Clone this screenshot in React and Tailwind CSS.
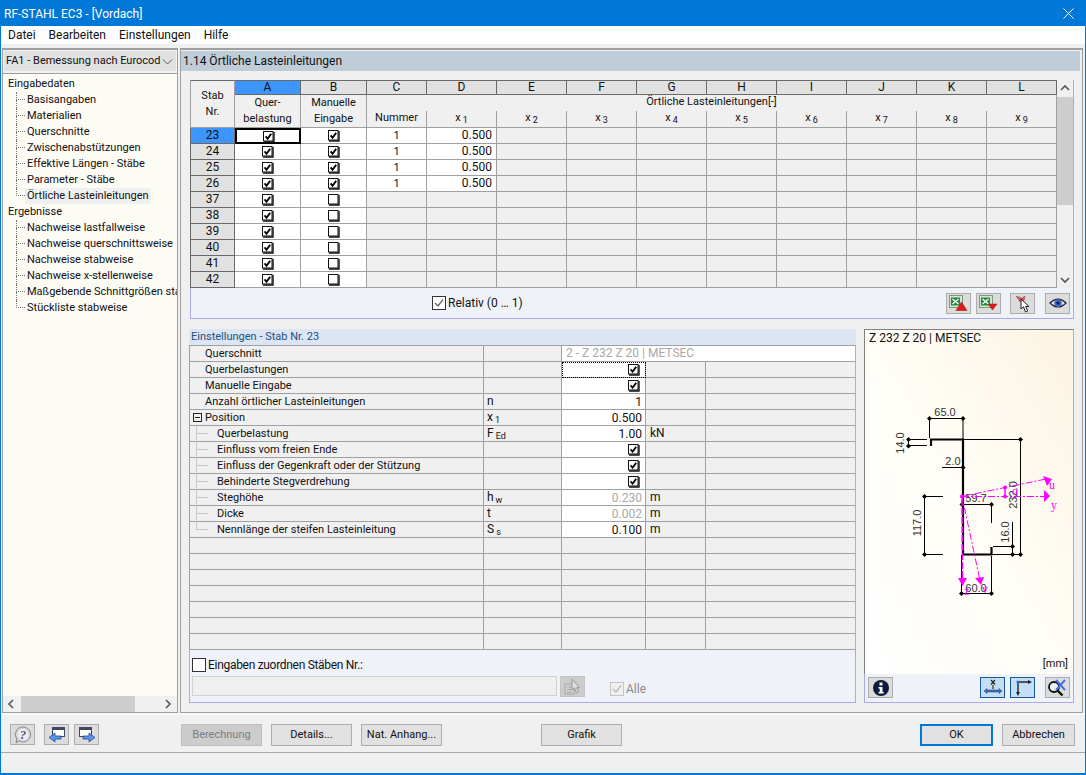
import React from 'react';

const FONT = '[font-family:Roboto,sans-serif]';

const treeInput = [
  'Basisangaben',
  'Materialien',
  'Querschnitte',
  'Zwischenabstützungen',
  'Effektive Längen - Stäbe',
  'Parameter - Stäbe',
  'Örtliche Lasteinleitungen',
];
const treeResults = [
  'Nachweise lastfallweise',
  'Nachweise querschnittsweise',
  'Nachweise stabweise',
  'Nachweise x-stellenweise',
  'Maßgebende Schnittgrößen stabweise',
  'Stückliste stabweise',
];

const letters = ['C', 'D', 'E', 'F', 'G', 'H', 'I', 'J', 'K', 'L'];
const xCols = ['1', '2', '3', '4', '5', '6', '7', '8', '9'];
const members = [
  { nr: 23, manual: true, nummer: '1', x1: '0.500' },
  { nr: 24, manual: true, nummer: '1', x1: '0.500' },
  { nr: 25, manual: true, nummer: '1', x1: '0.500' },
  { nr: 26, manual: true, nummer: '1', x1: '0.500' },
  { nr: 37 },
  { nr: 38 },
  { nr: 39 },
  { nr: 40 },
  { nr: 41 },
  { nr: 42 },
];

const settings = [
  { label: 'Querschnitt', wide: '2 - Z 232 Z 20 | METSEC' },
  { label: 'Querbelastungen', check: true, focus: true },
  { label: 'Manuelle Eingabe', check: true },
  { label: 'Anzahl örtlicher Lasteinleitungen', sym: 'n', value: '1' },
  { label: 'Position', group: true, sym: 'x', sub: '1', value: '0.500' },
  { label: 'Querbelastung', child: true, sym: 'F', sub: 'Ed', value: '1.00', unit: 'kN' },
  { label: 'Einfluss vom freien Ende', child: true, check: true },
  { label: 'Einfluss der Gegenkraft oder der Stützung', child: true, check: true },
  { label: 'Behinderte Stegverdrehung', child: true, check: true },
  { label: 'Steghöhe', child: true, sym: 'h', sub: 'w', value: '0.230', muted: true, unit: 'm' },
  { label: 'Dicke', child: true, sym: 't', value: '0.002', muted: true, unit: 'm' },
  { label: 'Nennlänge der steifen Lasteinleitung', child: true, last: true, sym: 'S', sub: 's', value: '0.100', unit: 'm' },
  {}, {}, {}, {}, {}, {}, {},
];

function Check({ on = true }) {
  return (
    <svg width="13" height="13" viewBox="0 0 13 13" className="shrink-0">
      <rect x="1.5" y="1.5" width="9.5" height="9.5" fill="#fff" stroke="#111" />
      <path d="M2 12h10V2" fill="none" stroke="#111" strokeWidth="1.4" />
      {on && <path d="M3.6 6.4l2 2.4 3.6-5" fill="none" stroke="#000" strokeWidth="1.9" />}
    </svg>
  );
}

function LightCheck({ on, muted }) {
  return (
    <svg width="14" height="14" viewBox="0 0 14 14" className="shrink-0">
      <rect x=".5" y=".5" width="13" height="13" fill={muted ? '#f0f0f0' : '#fff'} stroke={muted ? '#c4c4c4' : '#333'} />
      {on && <path d="M3 7l3 3 5-6.500" fill="none" stroke={muted ? '#b8b8b8' : '#666'} strokeWidth="1.300" />}
    </svg>
  );
}

function TreeRow({ label, last, active }) {
  return (
    <div className="flex h-4 ml-[9px]">
      <div className="w-[9px] h-4 shrink-0">
        <div className="h-2 border-l border-b border-dotted border-[#777]" />
        {!last && <div className="h-2 border-l border-dotted border-[#777]" />}
      </div>
      <div className={`px-[2px] leading-4 whitespace-nowrap ${active ? 'bg-[#f0f0f0]' : ''}`}>{label}</div>
    </div>
  );
}

function Arrow({ dir }) {
  const paths = {
    up: 'M2 7l4-4 4 4',
    down: 'M2 4l4 4 4-4',
    left: 'M7 2L3 6l4 4',
    right: 'M4 2l4 4-4 4',
  };
  return (
    <svg width="12" height="12" viewBox="0 0 12 12">
      <path d={paths[dir]} fill="none" stroke="#555" strokeWidth="1.600" />
    </svg>
  );
}

function Sub({ sym, sub }) {
  return (
    <span>
      {sym}
      {sub && <span className="text-[9px] ml-[2px] relative top-[2px]">{sub}</span>}
    </span>
  );
}

function ToolBtn({ children, className = '', active }) {
  return (
    <button
      className={`w-[25px] h-[21px] flex items-center justify-center shrink-0 border ${
        active ? 'bg-[#c3dff5] border-[#17589c]' : 'bg-[#dcdcdc] border-[#adadad]'
      } ${className}`}
    >
      {children}
    </button>
  );
}

function Btn({ children, className = '', disabled }) {
  return (
    <button
      className={`w-[81px] h-[22px] shrink-0 border text-center ${
        disabled ? 'bg-[#cccccc] border-[#bfbfbf] text-[#7d7d7d]' : 'bg-[#e1e1e1] border-[#adadad]'
      } ${className}`}
    >
      {children}
    </button>
  );
}

function ExcelIcon({ down }) {
  return (
    <svg width="21" height="18" viewBox="0 0 21 18">
      <rect x="1.500" y="1.500" width="13" height="12" fill="#d6e4d6" stroke="#7d9a7d" />
      <rect x="3" y="3.500" width="9" height="8" fill="#1f8a3c" />
      <path d="M4.500 5l6 5M10.500 5l-6 5" stroke="#fff" strokeWidth="1.300" />
      {down ? (
        <path d="M10 10h9l-4.500 6z" fill="#e01818" stroke="#8f1010" strokeWidth=".5" />
      ) : (
        <path d="M13.500 8l5.500 8.500H8z" fill="#e01818" stroke="#8f1010" strokeWidth=".5" />
      )}
    </svg>
  );
}

function PinIcon() {
  return (
    <svg width="20" height="19" viewBox="0 0 20 19">
      <path d="M3 2l6 2 3-2-1 5-4 1z" fill="#d9525e" stroke="#9a5a60" strokeWidth=".6" />
      <path d="M8 5v10l2.500-2.200L12.500 18l2.200-1-2-4.500h3.300z" fill="#fff" stroke="#222" />
    </svg>
  );
}

function EyeIcon() {
  return (
    <svg width="20" height="14" viewBox="0 0 20 14">
      <path d="M2 7q8-8 16 0q-8 8-16 0z" fill="#dfe6f5" stroke="#222" strokeWidth="1.200" />
      <circle cx="10" cy="7" r="3.800" fill="#4468c9" />
      <circle cx="10" cy="7" r="1.600" fill="#0c1a44" />
    </svg>
  );
}

function HelpIcon() {
  return (
    <svg width="20" height="18" viewBox="0 0 20 18">
      <path d="M10 1a7.500 7.500 0 1 1-4 13.800L3 17l.8-4A7.500 7.500 0 0 1 10 1z" fill="#d4d6dc" stroke="#8a8a8a" />
      <circle cx="10" cy="8.500" r="5.500" fill="#eeeeee" />
      <text x="10" y="13" textAnchor="middle" fontSize="13" fontWeight="700" fontStyle="italic" fill="#4d5874" fontFamily="Liberation Serif, serif">?</text>
    </svg>
  );
}

function WinArrowIcon({ right }) {
  return (
    <svg width="20" height="18" viewBox="0 0 20 18">
      {right ? (
        <>
          <rect x="2.500" y="1.500" width="12" height="9" fill="#fff" stroke="#40495c" />
          <rect x="2.500" y="1.500" width="12" height="2.500" fill="#40495c" />
          <path d="M6 10h6V7l6 4.500-6 4.500v-3H6z" fill="#5b95ea" stroke="#1f4aa0" strokeWidth=".8" />
        </>
      ) : (
        <>
          <rect x="5.500" y="1.500" width="12" height="9" fill="#fff" stroke="#40495c" />
          <rect x="5.500" y="1.500" width="12" height="2.500" fill="#40495c" />
          <path d="M14 10H8V7l-6 4.500L8 16v-3h6z" fill="#5b95ea" stroke="#1f4aa0" strokeWidth=".8" />
        </>
      )}
    </svg>
  );
}

function InfoIcon() {
  return (
    <svg width="18" height="18" viewBox="0 0 18 18">
      <circle cx="9" cy="9" r="8" fill="#0e1b3c" />
      <rect x="7.500" y="3.500" width="3" height="3" fill="#fff" />
      <path d="M6.500 8h4v5h1.200v1.500H6.500V13h1.200V9.500H6.500z" fill="#fff" />
    </svg>
  );
}

function BeamIcon() {
  return (
    <svg width="20" height="18" viewBox="0 0 20 18">
      <path d="M8 1l4 4.500M12 1L8 5.500" stroke="#222" strokeWidth="1.200" />
      <path d="M9 6h2v4H9z" fill="#777" />
      <path d="M1 12l3-2.500v1.500h12V9.500l3 2.500-3 2.500V13H4v1.500z" fill="#3d6fb8" stroke="#1f3f7a" strokeWidth=".5" />
    </svg>
  );
}

function AxesIcon() {
  return (
    <svg width="20" height="18" viewBox="0 0 20 18">
      <path d="M5 3v11M5 3h11" stroke="#222" strokeWidth="1.400" fill="none" />
      <path d="M15 1l4 2-4 2zM3 13l2 4 2-4z" fill="#222" />
      <circle cx="5" cy="3" r="1.600" fill="#3d6fb8" />
    </svg>
  );
}

function ZoomOffIcon() {
  return (
    <svg width="21" height="19" viewBox="0 0 21 19">
      <circle cx="7" cy="9" r="5" fill="#eef2f7" stroke="#111" strokeWidth="1.800" />
      <path d="M10.500 12.500l5 5" stroke="#111" strokeWidth="2.400" />
      <path d="M9 2l9 10M18 2l-9 10" stroke="#4a72d8" strokeWidth="2" />
    </svg>
  );
}

function PickIcon() {
  return (
    <svg width="20" height="19" viewBox="0 0 20 19" opacity=".6">
      <rect x="2" y="7" width="9" height="10" fill="#d8d8d8" stroke="#8a8a8a" />
      <path d="M4 10h5M4 12.500h5M4 15h5" stroke="#8a8a8a" />
      <path d="M9 2v11l2.500-2.200L13.500 16l2-1-2-4.300h3z" fill="#eee" stroke="#777" />
    </svg>
  );
}

function Dot({ x, y }) {
  return <path d={`M${x - 2.500} ${y}L${x} ${y - 2.500}L${x + 2.500} ${y}L${x} ${y + 2.500}z`} fill="#000" />;
}

function Section() {
  const dim = 'fill-[#333] text-[11px]';
  return (
    <svg viewBox="865 346 208 309" className="w-[208px] h-[309px] [font-family:Liberation_Sans,sans-serif]">
      <g stroke="#000" strokeWidth="1" fill="none">
        <path d="M929.500 418.500H963M929.500 418.500V438M963 418.500V439" />
        <path d="M908.500 439.500V446M908 439.500H927M908 445.500H927" />
        <path d="M942 467.500H963" />
        <path d="M963 439.500H1021M992 554.500H1021M1020.500 439.500V554.500" />
        <path d="M924.500 496.500V554.500M924 496.500H943M924 554.500H943" />
        <path d="M962 504.500H992M991.500 504.500V523" />
        <path d="M1012.500 522V554.500M993 546.500H1013" />
        <path d="M961.500 555V594M991.500 556V594M961 593.500H992" />
      </g>
      <path d="M931 446V439.500H963V554.500H991.500V547" fill="none" stroke="#000" strokeWidth="2.200" />
      <g>
        <Dot x={929.500} y={418.500} />
        <Dot x={963} y={418.500} />
        <Dot x={908.500} y={439.500} />
        <Dot x={908.500} y={446} />
        <Dot x={963} y={467.500} />
        <Dot x={1020.500} y={439.500} />
        <Dot x={1020.500} y={554.500} />
        <Dot x={924.500} y={496.500} />
        <Dot x={924.500} y={554.500} />
        <Dot x={962} y={504.500} />
        <Dot x={991.500} y={504.500} />
        <Dot x={1012.500} y={546.500} />
        <Dot x={1012.500} y={554.500} />
        <Dot x={961.500} y={593.500} />
        <Dot x={991.500} y={593.500} />
      </g>
      <text x="945" y="416" textAnchor="middle" className={dim}>65.0</text>
      <text x="953" y="465" textAnchor="middle" className={dim}>2.0</text>
      <text x="976" y="502" textAnchor="middle" className={dim}>59.7</text>
      <text x="976" y="592" textAnchor="middle" className={dim}>60.0</text>
      <text transform="translate(904 443) rotate(-90)" textAnchor="middle" className={dim}>14.0</text>
      <text transform="translate(921 523) rotate(-90)" textAnchor="middle" className={dim}>117.0</text>
      <text transform="translate(1017 495) rotate(-90)" textAnchor="middle" className={dim}>232.0</text>
      <text transform="translate(1009 532) rotate(-90)" textAnchor="middle" className={dim}>16.0</text>
      <g stroke="#ff00ff" strokeWidth="1" fill="none">
        <path d="M962 496.500H1045" strokeDasharray="7 2 2 2" />
        <path d="M962 496.500L1046 479" strokeDasharray="7 2 2 2" />
        <path d="M979.500 578L962 496.500" strokeDasharray="7 2 2 2" />
        <path d="M962.500 578L962 496.500" strokeWidth="1.500" strokeDasharray="7 2" />
        <path d="M1005 487V497" strokeWidth="1.500" />
      </g>
      <g fill="#ff00ff">
        <path d="M1044 490V502l6-6z" />
        <path d="M1043 476l4 10 5-7z" />
        <path d="M958 578h9l-4.500 8z" />
        <path d="M975 578l9-1-3 8z" />
        <circle cx="1005" cy="487.500" r="2" />
        <circle cx="1005" cy="496.500" r="2" />
        <circle cx="962" cy="496.500" r="2" />
      </g>
      <g className="fill-[#ff00ff] text-[12px] [font-family:Liberation_Serif,serif]">
        <text x="1049" y="489">u</text>
        <text x="1051" y="509">y</text>
        <text x="964" y="595">z</text>
        <text x="982" y="593">v</text>
        <text x="1012" y="495">α</text>
      </g>
    </svg>
  );
}

export default function App() {
  return (
    <div className={`w-[1086px] h-[775px] flex flex-col border border-b-2 border-[#0078d7] bg-[#f0f0f0] text-[11px] text-[#111] overflow-hidden ${FONT}`}>
      <div className="h-[25px] shrink-0 bg-[#0078d7] flex items-center justify-between pl-[3px] pr-[11px] text-white text-[12px]">
        <span>RF-STAHL EC3 - [Vordach]</span>
        <svg width="11" height="11" viewBox="0 0 11 11">
          <path d="M.5.5l10 10M10.500.5l-10 10" stroke="#fff" strokeWidth="1" />
        </svg>
      </div>
      <div className="h-[18px] shrink-0 bg-white flex items-center gap-[13px] pl-[7px] text-[12px]">
        <span>Datei</span>
        <span>Bearbeiten</span>
        <span>Einstellungen</span>
        <span>Hilfe</span>
      </div>

      <div className="mt-[4px] h-[665px] shrink-0 flex gap-[2px] pl-[1px]">
        {/* navigator */}
        <div className="w-[176px] flex flex-col border-t-2 border-x border-b border-[#a0a0a0]">
          <div className="mx-px mt-px h-[20px] bg-[#e1e1e1] flex items-center justify-between pl-[2px] pr-[3px] shrink-0">
            <span className="whitespace-nowrap">FA1 - Bemessung nach Eurocod</span>
            <svg width="11" height="11" viewBox="0 0 11 11" className="shrink-0">
              <path d="M1 3.500l4.500 4.500L10 3.500" fill="none" stroke="#555" />
            </svg>
          </div>
          <div className="mt-[2px] flex-1 flex flex-col min-h-0 border-t border-[#a0a0a0] bg-[#fcfbf4]">
            <div className="flex-1 overflow-hidden pl-[4px] pt-[2px]">
              <div className="h-4 leading-4 ml-[1px]">Eingabedaten</div>
              {treeInput.map((t, i) => (
                <TreeRow key={t} label={t} last={i === treeInput.length - 1} active={i === treeInput.length - 1} />
              ))}
              <div className="h-4 leading-4 ml-[1px]">Ergebnisse</div>
              {treeResults.map((t, i) => (
                <TreeRow key={t} label={t} last={i === treeResults.length - 1} />
              ))}
            </div>
            <div className="h-[16px] shrink-0 bg-[#f0f0f0] flex items-center">
              <div className="w-[18px] flex justify-center"><Arrow dir="left" /></div>
              <div className="w-[114px] h-full bg-[#cdcdcd]" />
              <div className="flex-1" />
              <div className="w-[18px] flex justify-center"><Arrow dir="right" /></div>
            </div>
          </div>
        </div>

        {/* content */}
        <div className="w-[903px] flex flex-col border-t-2 border-x border-b border-[#a0a0a0]">
          <div className="mt-px h-[20px] w-[899px] bg-[#bfcdd9] pl-[2px] leading-[20px] text-[12px] shrink-0">1.14 Örtliche Lasteinleitungen</div>

          {/* upper table */}
          <div className="mt-[9px] ml-[9px] w-[884px] shrink-0">
            <div className="flex border-r border-[#aaaaea]">
              <div className="w-[867px] grid grid-cols-[45px_66px_66px_60px_repeat(9,70px)] grid-rows-[15px_16px_17px_repeat(10,16px)]">
                <div className="row-span-3 flex flex-col items-center justify-center border-t border-l border-b border-r border-t-[#696969] border-l-[#a0a0a0] border-b-[#a0a0a0] border-r-[#a0a0a0] leading-[16px]">
                  <span>Stab</span>
                  <span>Nr.</span>
                </div>
                <div className="border-y border-r border-[#696969] bg-[#3d95ff] text-center text-[12px] leading-[13px]">A</div>
                <div className="border-y border-r border-[#696969] bg-[#e1e1e1] text-center text-[12px] leading-[13px]">B</div>
                {letters.map((l) => (
                  <div key={l} className="border-y border-r border-[#696969] bg-[#e1e1e1] text-center text-[12px] leading-[13px]">{l}</div>
                ))}

                <div className="row-span-2 flex flex-col items-center justify-center border-r border-b border-[#a0a0a0] leading-[16px]">
                  <span>Quer-</span>
                  <span>belastung</span>
                </div>
                <div className="row-span-2 flex flex-col items-center justify-center border-r border-b border-[#a0a0a0] leading-[16px]">
                  <span>Manuelle</span>
                  <span>Eingabe</span>
                </div>
                <div className="col-span-10 text-center leading-[14px] border-r border-[#a0a0a0]">Örtliche Lasteinleitungen[-]</div>

                <div className="text-center border-r border-b border-[#a0a0a0] leading-[14px]">Nummer</div>
                {xCols.map((n) => (
                  <div key={n} className="text-center border-r border-b border-[#a0a0a0] leading-[14px]">
                    <Sub sym="x" sub={n} />
                  </div>
                ))}

                {members.map((m, i) => (
                  <React.Fragment key={m.nr}>
                    <div className={`border-x border-b border-x-[#696969] border-b-[#696969] text-center text-[12px] leading-[15px] ${i === 0 ? 'bg-[#3d95ff]' : 'bg-[#e1e1e1]'}`}>{m.nr}</div>
                    <div className={`bg-white flex items-center justify-center ${i === 0 ? 'border-2 border-black' : 'border-r border-b border-[#a0a0a0]'}`}>
                      <Check />
                    </div>
                    <div className="bg-white flex items-center justify-center border-r border-b border-[#a0a0a0]">
                      <Check on={!!m.manual} />
                    </div>
                    <div className={`text-center leading-[15px] border-r border-b border-[#a0a0a0] ${m.nummer ? 'bg-white' : ''}`}>{m.nummer}</div>
                    <div className={`text-right pr-[4px] text-[12px] leading-[15px] border-r border-b border-[#a0a0a0] ${m.x1 ? 'bg-white' : ''}`}>{m.x1}</div>
                    {letters.slice(2).map((l) => (
                      <div key={l} className="border-r border-b border-[#a0a0a0]" />
                    ))}
                  </React.Fragment>
                ))}
              </div>
              <div className="w-[16px] flex flex-col bg-[#f0f0f0]">
                <div className="h-[17px] flex items-center justify-center"><Arrow dir="up" /></div>
                <div className="h-[108px] bg-[#cdcdcd]" />
                <div className="flex-1" />
                <div className="h-[16px] flex items-center justify-center"><Arrow dir="down" /></div>
              </div>
            </div>
            <div className="h-[31px] flex items-center bg-[#eff3f9] border-x border-b border-[#aaaaea]">
              <div className="w-[241px] shrink-0" />
              <LightCheck on />
              <span className="ml-[2px] w-[78px] shrink-0 text-[12px] whitespace-nowrap">Relativ (0 … 1)</span>
              <ToolBtn className="ml-[420px]"><ExcelIcon /></ToolBtn>
              <ToolBtn className="ml-[5px]"><ExcelIcon down /></ToolBtn>
              <ToolBtn className="ml-[9px]"><PinIcon /></ToolBtn>
              <ToolBtn className="ml-[10px]"><EyeIcon /></ToolBtn>
            </div>
          </div>

          {/* lower area */}
          <div className="mt-[10px] ml-[8px] flex gap-[8px] h-[374px] shrink-0">
            <div className="w-[667px] flex flex-col">
              <div className="h-[16px] bg-[#dce5f3] pl-[2px] leading-[16px] text-[#1d4f80] shrink-0">Einstellungen - Stab Nr. 23</div>
              <div className="grid grid-cols-[294px_78px_84px_60px_149px] auto-rows-[16px] border-t border-l border-r border-[#a0a0a0] border-r-[#aaaaea] shrink-0">
                {settings.map((s, i) => (
                  <React.Fragment key={i}>
                    <div className="relative border-r border-b border-[#a0a0a0] flex items-center leading-[15px] whitespace-nowrap">
                      {s.group && (
                        <span className="absolute left-[3px] top-[3px] w-[9px] h-[9px] border border-[#222] flex items-center justify-center">
                          <span className="w-[5px] h-px bg-[#222]" />
                        </span>
                      )}
                      {s.child && (
                        <>
                          <span className={`absolute left-[6px] top-0 w-px bg-[#c8c8c8] ${s.last ? 'h-[8px]' : 'h-[16px]'}`} />
                          <span className="absolute left-[7px] top-[7px] w-[11px] h-px bg-[#c8c8c8]" />
                        </>
                      )}
                      <span className={s.child ? 'ml-[27px]' : s.label ? 'ml-[15px]' : ''}>{s.label}</span>
                    </div>
                    <div className="border-r border-b border-[#a0a0a0] pl-[3px] text-[12px] leading-[15px]">
                      {s.sym && <Sub sym={s.sym} sub={s.sub} />}
                    </div>
                    {s.wide ? (
                      <div className="col-span-3 bg-white border-b border-[#a0a0a0] pl-[4px] text-[12px] leading-[15px] text-[#a8a8a8]">{s.wide}</div>
                    ) : (
                      <>
                        <div className={`border-r border-b border-[#a0a0a0] flex items-center justify-end pr-[3px] text-[12px] ${s.check || s.value ? 'bg-white' : ''} ${s.muted ? 'text-[#a8a8a8]' : ''} ${s.focus ? 'outline-1 outline-dotted outline-black -outline-offset-1' : ''}`}>
                          {s.check ? <span className="mr-[2px] flex"><Check /></span> : s.value}
                        </div>
                        <div className="border-r border-b border-[#a0a0a0] pl-[4px] text-[12px] leading-[15px]">{s.unit}</div>
                        <div className="border-b border-[#a0a0a0]" />
                      </>
                    )}
                  </React.Fragment>
                ))}
              </div>
              <div className="flex-1 bg-[#eff3f9] border-x border-b border-[#aaaaea] pl-[2px] pt-[8px]">
                <div className="flex items-center h-[14px]">
                  <LightCheck />
                  <span className="ml-[2px] text-[12px] tracking-[-0.3px]">Eingaben zuordnen Stäben Nr.:</span>
                </div>
                <div className="flex items-start mt-[4px]">
                  <div className="w-[365px] h-[20px] bg-[#efefef] border border-[#d2d2d2]" />
                  <ToolBtn className="ml-[3px] !bg-[#cccccc] !border-[#c4c4c4]"><PickIcon /></ToolBtn>
                  <div className="ml-[25px] mt-[4px] flex items-center text-[#8a8a8a] text-[12px]">
                    <LightCheck on muted />
                    <span className="ml-[2px]">Alle</span>
                  </div>
                </div>
              </div>
            </div>

            <div className="w-[210px] flex flex-col">
              <div className="h-[345px] shrink-0 flex flex-col border-t border-l border-r border-[#808080] border-r-[#aaaaea] bg-gradient-to-tr from-[#ffffff] via-[#fffdf6] to-[#fcf4e2]">
                <div className="h-[16px] pl-[4px] leading-[16px] text-[12px] shrink-0">Z 232 Z 20 | METSEC</div>
                <Section />
                <div className="flex-1 text-right pr-[5px] leading-[18px]">[mm]</div>
              </div>
              <div className="flex-1 flex items-start pt-[3px] bg-[#eff3f9] border-x border-b border-[#aaaaea] pl-[3px]">
                <ToolBtn><InfoIcon /></ToolBtn>
                <ToolBtn active className="ml-[87px]"><BeamIcon /></ToolBtn>
                <ToolBtn active className="ml-[5px]"><AxesIcon /></ToolBtn>
                <ToolBtn className="ml-[10px]"><ZoomOffIcon /></ToolBtn>
              </div>
            </div>
          </div>
        </div>
      </div>

      {/* footer */}
      <div className="mt-0 h-[39px] shrink-0 border-t-2 border-[#f8f8f8] pt-[9px] flex items-start pl-[9px] pr-[10px]">
        <ToolBtn><HelpIcon /></ToolBtn>
        <ToolBtn className="ml-[9px]"><WinArrowIcon /></ToolBtn>
        <ToolBtn className="ml-[5px]"><WinArrowIcon right /></ToolBtn>
        <Btn disabled className="ml-[82px]">Berechnung</Btn>
        <Btn className="ml-[9px]">Details...</Btn>
        <Btn className="ml-[9px]">Nat. Anhang...</Btn>
        <Btn className="ml-[99px]">Grafik</Btn>
        <button className="ml-auto w-[73px] h-[22px] bg-[#e1e1e1] border-2 border-[#0078d7]">OK</button>
        <button className="ml-[9px] w-[73px] h-[22px] bg-[#e1e1e1] border border-[#adadad]">Abbrechen</button>
      </div>
      <div className="flex-1 border-t border-[#a9a9a9]" />
    </div>
  );
}
